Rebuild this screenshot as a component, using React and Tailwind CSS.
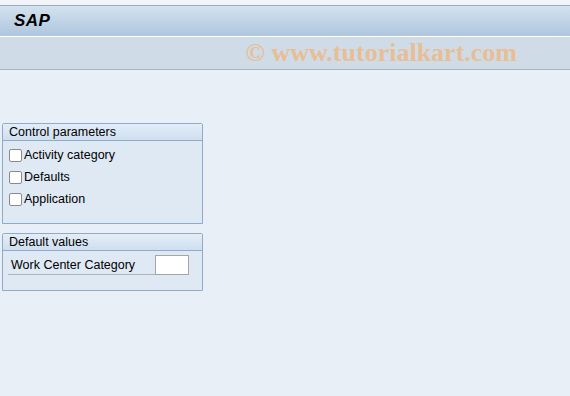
export default function App() {
  const checks = ["Activity category", "Defaults", "Application"];
  return (
    <div className="w-[570px] h-[396px] bg-[#e9eff7] font-['Liberation_Sans',Arial,sans-serif] text-[12.5px] text-black overflow-hidden">
      {/* top strip */}
      <div className="h-[6px] bg-[#f1f4f9] border-b border-[#9eabbf]" />
      {/* title bar */}
      <div className="h-[30px] bg-gradient-to-b from-[#d3e2ef] to-[#afc6dd] flex items-center px-[14px]">
        <span className="italic font-bold text-[17px] tracking-[0.5px]">SAP</span>
      </div>
      {/* toolbar */}
      <div className="h-[34px] border-t border-white bg-[#cfdce8] border-b border-b-[#a6b4c6] flex items-center justify-end pr-[53px]">
        <span className="font-['Liberation_Serif',serif] font-bold text-[26px] leading-none text-[#ebbb8c] opacity-90">
          © www.tutorialkart.com
        </span>
      </div>

      <div className="pt-[53px] pl-[2px] flex flex-col gap-[9px]">
        {/* Control parameters */}
        <div className="w-[201px] h-[101px] border border-[#8fabc9] rounded-t-[2px] bg-[#dfe9f4]">
          <div className="h-[17px] bg-gradient-to-b from-[#e3edf7] to-[#cfdff0] border-b border-[#8fabc9] px-[6px] flex items-center">
            Control parameters
          </div>
          <div className="pt-[8px] pl-[6px] flex flex-col gap-[9px]">
            {checks.map((c) => (
              <label key={c} className="flex items-center h-[13px]">
                <span className="w-[13px] h-[13px] border border-[#8a8a8a] bg-white rounded-[2px]" />
                <span className="ml-[2px]">{c}</span>
              </label>
            ))}
          </div>
        </div>

        {/* Default values */}
        <div className="w-[201px] h-[58px] border border-[#8fabc9] rounded-t-[2px] bg-[#dfe9f4]">
          <div className="h-[17px] bg-gradient-to-b from-[#e3edf7] to-[#cfdff0] border-b border-[#8fabc9] px-[6px] flex items-center">
            Default values
          </div>
          <div className="pt-[4px] pl-[5px] flex items-end">
            <div className="w-[147px] h-[20px] border-b border-[#a9b3bd] pl-[3px] pt-[2px] flex items-center">
              Work Center Category
            </div>
            <div className="w-[34px] h-[20px] bg-white border border-[#a6a6a6]" />
          </div>
        </div>
      </div>
    </div>
  );
}
